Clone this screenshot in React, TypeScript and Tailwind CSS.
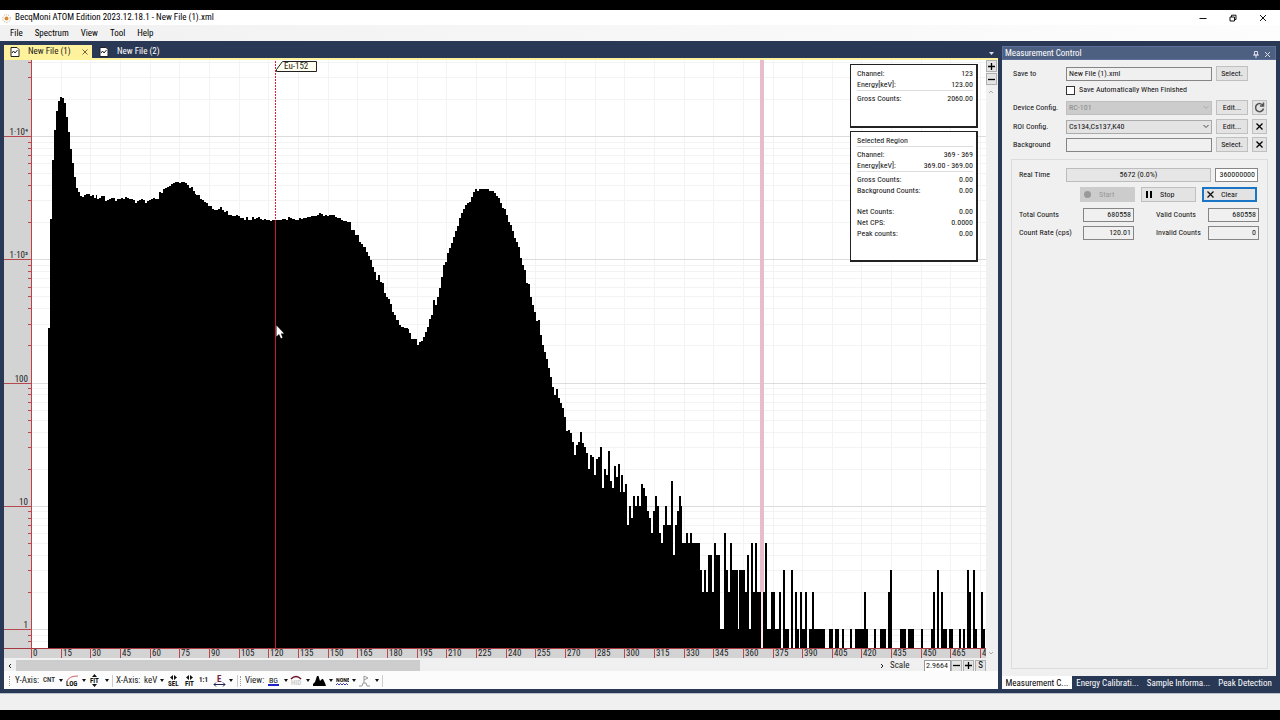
import type { ReactNode } from "react";

// Column tops of the smooth part of the spectrum: one value per channel, 2px wide
const COLUMN_WIDTH = 2;
const COLUMN_START = 48;
const columns: number[] = [
  328, 219, 160, 130, 111, 101, 97, 98, 103, 117, 132, 149, 163, 177, 188, 192, 196, 197, 195, 194, 194, 196, 195,
  198, 195, 199, 198, 196, 196, 201, 200, 199, 198, 198, 201, 199, 199, 198, 199, 197, 198, 199, 199, 200, 203, 201,
  200, 199, 200, 203, 201, 200, 199, 198, 199, 199, 192, 193, 189, 188, 187, 186, 184, 183, 182, 182, 183, 182, 182,
  183, 185, 188, 187, 191, 194, 195, 195, 199, 200, 202, 203, 206, 206, 209, 210, 210, 209, 207, 210, 212, 211, 215,
  215, 216, 216, 215, 216, 218, 218, 220, 217, 220, 220, 217, 219, 218, 217, 219, 220, 219, 220, 220, 221, 220, 220,
  220, 220, 220, 219, 219, 220, 217, 218, 219, 219, 220, 220, 218, 219, 218, 218, 217, 217, 216, 216, 216, 215, 213,
  214, 216, 215, 216, 215, 215, 215, 217, 218, 218, 220, 221, 221, 222, 222, 230, 230,
];

// Step outline past the plateau: [x, y]
const outline: [number, number][] = [
  [350, 230], [355, 235], [359, 242], [361, 244], [363, 247], [366, 252], [368, 256], [370, 260], [372, 267],
  [374, 272], [376, 280], [378, 275], [380, 282], [382, 283], [384, 293], [386, 297], [388, 299], [390, 304],
  [392, 312], [394, 315], [396, 320], [399, 325], [401, 327], [404, 328], [408, 329], [409, 333], [411, 339],
  [415, 339], [417, 345], [419, 342], [421, 341], [423, 337], [425, 332], [427, 327], [429, 319], [431, 315],
  [433, 300], [435, 305], [437, 297], [439, 288], [441, 277], [443, 265], [445, 262], [447, 253], [449, 248],
  [451, 243], [453, 237], [455, 231], [457, 226], [459, 218], [461, 213], [463, 209], [465, 205], [467, 203],
  [469, 202], [471, 197], [473, 192], [475, 189], [477, 191], [479, 189], [489, 191], [494, 193], [496, 196],
  [498, 198], [500, 203], [502, 208], [504, 209], [506, 215], [508, 222], [510, 225], [512, 231], [514, 238],
  [516, 242], [518, 247], [520, 258], [522, 265], [524, 270], [526, 283], [528, 284], [530, 297], [532, 305],
  [534, 312], [536, 321], [538, 320], [540, 335], [542, 345], [544, 352], [546, 359], [548, 368], [550, 377],
  [552, 387], [554, 395], [556, 389], [558, 398], [560, 403], [562, 408], [564, 417], [566, 431], [568, 430],
  [570, 433], [572, 442], [574, 455], [576, 445], [578, 442], [580, 432], [582, 443], [584, 447], [586, 453],
  [588, 469], [590, 455], [592, 457], [594, 475], [596, 459], [598, 457], [600, 447], [602, 488], [604, 469],
  [606, 475], [608, 451], [610, 481], [612, 488], [614, 466], [616, 477], [618, 464], [620, 492], [621, 475],
  [623, 492], [625, 484], [627, 525], [629, 506], [631, 518], [633, 496], [635, 506], [637, 496], [639, 506],
  [641, 484], [643, 488], [645, 496], [647, 511], [649, 518], [651, 533], [653, 511], [655, 496], [657, 506],
  [659, 533], [661, 543], [663, 525], [665, 506], [667, 525], [671, 481], [673, 555], [675, 525], [677, 511],
  [679, 496], [681, 506], [682, 543], [686, 533], [688, 543], [690, 533], [692, 543],
];

// Sparse tail: [x, counts]
const tail: [number, number][] = [
  [700, 3], [702, 2], [704, 3], [706, 2], [708, 4], [712, 2], [714, 5], [716, 4], [720, 1], [724, 6], [726, 3],
  [728, 2], [730, 5], [732, 3], [738, 1], [739, 3], [745, 2], [747, 4], [749, 1], [751, 5], [753, 2], [755, 5],
  [757, 2], [765, 5], [767, 1], [771, 2], [775, 1], [779, 2], [781, 0], [783, 3], [785, 1], [789, 0], [791, 3],
  [793, 0], [795, 2], [797, 1], [799, 0], [800, 2], [802, 1], [805, 2], [807, 0], [809, 1], [812, 2], [814, 1],
  [825, 0], [829, 1], [833, 0], [835, 1], [839, 0], [842, 1], [844, 0], [850, 1], [852, 0], [855, 1], [864, 2],
  [866, 1], [868, 0], [874, 1], [876, 0], [880, 1], [886, 0], [888, 2], [890, 3], [892, 0], [900, 1], [906, 0],
  [908, 1], [914, 0], [921, 1], [923, 0], [931, 1], [933, 2], [935, 0], [937, 3], [939, 0], [941, 2], [943, 1],
  [947, 0], [949, 1], [953, 0], [959, 1], [961, 0], [963, 1], [965, 0], [967, 3], [969, 2], [971, 0], [973, 3],
  [975, 1], [977, 0], [981, 2], [983, 1],
];

const LEFT = 32;
const RIGHT = 986;
const BASE = 648;
const DECADE = 123.25;

const countToY = (n: number) => (n === 0 ? BASE : Math.floor(629.5 - DECADE * Math.log10(n)));

const steps: [number, number][] = [
  ...columns.map((y, i): [number, number] => [COLUMN_START + i * COLUMN_WIDTH - Math.round(i / 50), y]),
  ...outline,
  ...tail.map(([x, n]): [number, number] => [x, countToY(n)]),
];

const spectrumPath = `M48 ${BASE}` + steps.map(([x, y]) => `H${x}V${y}`).join("") + `H985V${BASE}Z`;

// A label with no room left before the right edge keeps its first digit only
const xTicks = Array.from({ length: 33 }, (_, i) => {
  const x = Math.floor(31.5 + i * 29.66);
  const label = String(i * 15);
  return { x, label: x + 14 > RIGHT ? label[0] : label };
});

const yTicks = Array.from({ length: 5 }, (_, d) =>
  Array.from({ length: 9 }, (_, k) => ({ major: k === 0, y: countToY((k + 1) * 10 ** d) }))
)
  .flat()
  .concat([
    { major: false, y: 635 },
    { major: false, y: 641 },
  ])
  .filter((t) => t.y > 60);

const yLabels = [
  { text: "1·10⁴", y: 136 },
  { text: "1·10³", y: 259 },
  { text: "100", y: 383 },
  { text: "10", y: 506 },
  { text: "1", y: 629 },
];

const markerDashes = Array.from({ length: 53 }, (_, i) => 61 + i * 3);

const ui = "font-['Roboto_Condensed','Roboto',sans-serif]";

function SpectrumChart() {
  return (
    <svg
      className="absolute inset-0 size-full"
      viewBox="4 60 982 598"
      preserveAspectRatio="xMinYMin slice"
      role="img"
      aria-label="Spectrum"
    >
      <rect x="4" y="60" width="982" height="598" fill="#fff" />
      <g shapeRendering="crispEdges">
        {xTicks.map((t) => (
          <rect key={t.x} x={t.x} y="60" width="1" height="588" fill="#f3f3f3" />
        ))}
        {yTicks.map((t) => (
          <rect key={t.y} x={LEFT} y={t.y} width={RIGHT - LEFT} height="1" fill={t.major ? "#dcdcdc" : "#f3f3f3"} />
        ))}
        <path d={spectrumPath} fill="#000" />

        {/* Axes */}
        <rect x="4" y="60" width="27" height="598" fill="#d3d3d3" />
        <rect x="4" y="649" width="982" height="9" fill="#d3d3d3" />
        <rect x="31" y="60" width="1" height="589" fill="#c04048" />
        <rect x="4" y="648" width="982" height="1" fill="#a83840" />
        {yTicks.map((t) => (
          <rect key={t.y} x={t.major ? 4 : 28} y={t.y} width={t.major ? 28 : 4} height="1" fill="#b84850" />
        ))}
        {xTicks.map((t) => (
          <rect key={t.x} x={t.x} y="648" width="1" height="10" fill="#b84850" />
        ))}

        {/* Selected region and nuclide marker */}
        <rect x="760" y="60" width="4" height="532" fill="#e8bccb" />
        <rect x="761" y="592" width="2" height="56" fill="#ffe4ea" />
        {markerDashes.map((y) => (
          <rect key={y} x="275" y={y} width="1" height="2" fill="#e02030" />
        ))}
        <rect x="275" y="220" width="1" height="428" fill="#c81c2c" />
      </g>
      <path d="M276.500 69.500L282.500 61.500H316.500V71.500H276.500Z" fill="#fffff0" stroke="#222" />
      <g className={`${ui} text-[9px]`} fill="#222">
        <text x="284" y="69">Eu-152</text>
        {yLabels.map((l) => (
          <text key={l.text} x="28" y={l.y - 1} textAnchor="end">{l.text}</text>
        ))}
        {xTicks.map((t) => (
          <text key={t.x} x={t.x + 2} y="656">{t.label}</text>
        ))}
      </g>
      <path d="M276.500 325.500V336.500L279 334L281 338.500L282.500 337.500L280.800 333.500H284Z" fill="#fff" />
    </svg>
  );
}

function InfoRow({ label, value, className = "" }: { label: string; value?: string; className?: string }) {
  return (
    <div className={`flex items-center justify-between ${className}`}>
      <dt>{label}</dt>
      {value && <dd>{value}</dd>}
    </div>
  );
}

const infoBox = "border border-[#222] border-r-2 border-b-2 bg-white pt-[3px] pr-[3px] pl-[6px]";
const ruled = "border-t border-[#ddd] pt-[2px]";

function InfoBoxes() {
  return (
    <div className="absolute top-1 right-2 flex w-32 flex-col gap-[3px] text-[8px] leading-[11px] text-[#111]">
      <dl className={`${infoBox} h-16`}>
        <InfoRow label="Channel:" value="123" />
        <InfoRow label="Energy[keV]:" value="123.00" />
        <InfoRow label="Gross Counts:" value="2060.00" className={ruled} />
      </dl>
      <dl className={`${infoBox} h-[131px]`}>
        <InfoRow label="Selected Region" />
        <InfoRow label="Channel:" value="369 - 369" className={ruled} />
        <InfoRow label="Energy[keV]:" value="369.00 - 369.00" />
        <InfoRow label="Gross Counts:" value="0.00" className={ruled} />
        <InfoRow label="Background Counts:" value="0.00" />
        <InfoRow label="Net Counts:" value="0.00" className="mt-[10px]" />
        <InfoRow label="Net CPS:" value="0.0000" />
        <InfoRow label="Peak counts:" value="0.00" />
      </dl>
    </div>
  );
}

function TitleBar() {
  return (
    <header className="flex h-[15px] shrink-0 items-center bg-white pt-px pr-[13px] pl-[2px] text-[9px] text-black">
      <svg className="mr-1 size-[9px]" viewBox="0 0 9 9" aria-hidden="true">
        <circle cx="4.500" cy="4.500" r="2" fill="#d98a3a" />
        <circle cx="4.500" cy="4.500" r="3.800" fill="none" stroke="#b99a74" strokeDasharray="1 1.400" />
      </svg>
      <h1 className="flex-1">BecqMoni ATOM Edition 2023.12.18.1 - New File (1).xml</h1>
      <div className="flex gap-[22px]">
        <button aria-label="Minimize">
          <svg className="size-2" viewBox="0 0 8 8" stroke="#111"><path d="M.5 4.500H7.500" /></svg>
        </button>
        <button aria-label="Restore">
          <svg className="size-2" viewBox="0 0 8 8" fill="none" stroke="#111">
            <path d="M1 3H5.500V7H1ZM2.500 3V1.200H7V5.500H5.500" />
          </svg>
        </button>
        <button aria-label="Close">
          <svg className="size-2" viewBox="0 0 8 8" stroke="#111"><path d="M1 1L7 7M7 1L1 7" /></svg>
        </button>
      </div>
    </header>
  );
}

function MenuBar() {
  return (
    <nav className="flex h-4 shrink-0 items-center gap-3 bg-linear-to-r from-[#f1f1f1] to-[#fdfdfd] pt-[2px] pl-[10px] text-[9px] text-black">
      {["File", "Spectrum", "View", "Tool", "Help"].map((item) => (
        <button key={item}>{item}</button>
      ))}
    </nav>
  );
}

function FileIcon({ className }: { className: string }) {
  return (
    <svg className={`size-[10px] ${className}`} viewBox="0 0 10 10" aria-hidden="true">
      <path d="M1 .5H7L9 2.500V9.500H1Z" fill="#fff" stroke="#222" />
      <path d="M2 6L3.500 4L5 6L7.500 3" fill="none" stroke="#222" />
    </svg>
  );
}

function DocumentTabs() {
  return (
    <div className="flex h-[19px] shrink-0 items-end border-b-2 border-[#fff29d] text-[9px]">
      <div className="flex h-[13px] w-[88px] items-center bg-[#fff29d] pt-px pr-1 pl-[6px] text-[#222]">
        <FileIcon className="mr-2" />
        <button className="flex-1 text-left">New File (1)</button>
        <button aria-label="Close tab">
          <svg className="size-[6px]" viewBox="0 0 6 6" stroke="#75633d"><path d="M.5 .5L5.500 5.500M5.500 .5L.5 5.500" /></svg>
        </button>
      </div>
      <button className="flex h-[13px] items-center pt-px pl-[7px] text-white">
        <FileIcon className="mr-2" />
        New File (2)
      </button>
      <button aria-label="Open files" className="mr-1 mb-[3px] ml-auto">
        <svg className="h-[3px] w-[5px]" viewBox="0 0 5 3" fill="#dde"><path d="M0 0H5L2.500 3Z" /></svg>
      </button>
    </div>
  );
}

function Glyph({ d }: { d: string }) {
  return (
    <svg className="size-[9px]" viewBox="0 0 9 9" fill="none" stroke="currentColor" strokeWidth="1.300">
      <path d={d} />
    </svg>
  );
}

const MINUS = "M1 4.500H8";
const PLUS = "M1 4.500H8M4.500 1V8";
const CROSS = "M1.500 1.500L7.500 7.500M7.500 1.500L1.500 7.500";

const smallButton = "flex h-3 w-[11px] items-center justify-center border border-[#b0b0b0] bg-[#e4e4e4] text-black";

function VerticalBar() {
  return (
    <div className="flex w-3 shrink-0 flex-col items-start bg-[#f0f0f0]">
      <button aria-label="Zoom in" className={smallButton}><Glyph d={PLUS} /></button>
      <button aria-label="Zoom out" className={`${smallButton} mt-px`}><Glyph d={MINUS} /></button>
      <button aria-label="Scroll up" className="mt-[5px] ml-[2px]">
        <svg className="h-1 w-[6px]" viewBox="0 0 6 4" fill="none" stroke="#aaa"><path d="M1 3L3 1L5 3" /></svg>
      </button>
      <button aria-label="Scroll down" className="mt-auto mb-[3px] ml-[2px]">
        <svg className="h-1 w-[6px]" viewBox="0 0 6 4" fill="none" stroke="#aaa"><path d="M1 1L3 3L5 1" /></svg>
      </button>
    </div>
  );
}

function ScaleRow() {
  return (
    <div className="flex h-[13px] shrink-0 items-center bg-[#f0f0f0] pt-[2px] pr-3 text-[9px] text-[#222]">
      <button aria-label="Scroll left" className="flex w-3 justify-center">
        <svg className="h-[6px] w-1" viewBox="0 0 4 6" fill="none" stroke="#222"><path d="M3 1L1 3L3 5" /></svg>
      </button>
      <div className="h-[11px] flex-1">
        <div className="h-full w-[47%] bg-[#cdcdcd]" />
      </div>
      <button aria-label="Scroll right" className="flex w-3 justify-center">
        <svg className="h-[6px] w-1" viewBox="0 0 4 6" fill="none" stroke="#222"><path d="M1 1L3 3L1 5" /></svg>
      </button>
      <label htmlFor="scale" className="ml-[2px] w-[34px]">Scale</label>
      <input id="scale" defaultValue="2.9664" className="h-3 w-[27px] border border-[#999] bg-white pl-px text-[8px]" />
      <button aria-label="Decrease scale" className={smallButton}><Glyph d={MINUS} /></button>
      <button aria-label="Increase scale" className={`${smallButton} ml-px`}><Glyph d={PLUS} /></button>
      <button className={`${smallButton} ml-px`}>S</button>
    </div>
  );
}

function ToolButton({ label, width, caret = true, children }: { label: string; width: string; caret?: boolean; children: ReactNode }) {
  return (
    <button aria-label={label} className={`flex h-full shrink-0 items-center justify-between ${width}`}>
      {children}
      {caret && <svg className="h-[3px] w-1" viewBox="0 0 4 3" fill="#111"><path d="M0 0H4L2 3Z" /></svg>}
    </button>
  );
}

const Grip = () => <span className="h-[10px] border-l border-dotted border-[#999]" />;
const Divider = () => <span className="h-3 border-l border-[#ccc]" />;

const iconText = "text-[7px] font-bold";

function Toolbar() {
  return (
    <div className="flex h-[18px] shrink-0 items-center bg-[#fcfcfc] pt-px pl-[5px] text-[9px] text-[#222]">
      <Grip />
      <span className="ml-[5px] w-7">Y-Axis:</span>
      <ToolButton label="Count unit" width="w-5"><span className="text-[7px] font-medium">CNT</span></ToolButton>
      <span className="w-[3px]" />
      <ToolButton label="Logarithmic scale" width="w-5">
        <svg className="h-3 w-[13px]" viewBox="0 0 13 12" fill="#111">
          <path d="M1 6Q3 1 12 1" fill="none" stroke="#c66" />
          <text x="0" y="11" className={iconText}>LOG</text>
        </svg>
      </ToolButton>
      <span className="w-[3px]" />
      <ToolButton label="Fit vertically" width="w-5">
        <svg className="h-[13px] w-[11px]" viewBox="0 0 11 13" fill="#111">
          <path d="M3 3L5.500 0L8 3ZM3 10L5.500 13L8 10Z" />
          <text x="1" y="9" className={iconText}>FIT</text>
        </svg>
      </ToolButton>
      <span className="w-[3px]" />
      <Divider />
      <span className="w-[31px] pl-[3px]">X-Axis:</span>
      <ToolButton label="X unit" width="w-5"><span>keV</span></ToolButton>
      <span className="w-[3px]" />
      <ToolButton label="Fit selection" width="w-[17px]" caret={false}>
        <svg className="h-3 w-[13px]" viewBox="0 0 13 12" fill="#111">
          <path d="M6 0V5L3 2.500ZM7 0V5L10 2.500Z" />
          <text x="1" y="11" className={iconText}>SEL</text>
        </svg>
      </ToolButton>
      <ToolButton label="Fit horizontally" width="w-[15px]" caret={false}>
        <svg className="h-3 w-[11px]" viewBox="0 0 11 12" fill="#111">
          <path d="M5 0V5L2 2.500ZM6 0V5L9 2.500Z" />
          <text x="1" y="11" className={iconText}>FIT</text>
        </svg>
      </ToolButton>
      <ToolButton label="Actual size" width="w-[14px]" caret={false}><span className={iconText}>1:1</span></ToolButton>
      <ToolButton label="Energy axis" width="w-5">
        <svg className="h-3 w-[13px]" viewBox="0 0 13 12" fill="#7a1f3d">
          <text x="4" y="7" className="text-[9px] font-bold">E</text>
          <path d="M1 9.500H12M3 7.500L1 9.500L3 11.500M10 7.500L12 9.500L10 11.500" fill="none" stroke="#225" />
        </svg>
      </ToolButton>
      <span className="w-1" />
      <Divider />
      <span className="w-[2px]" />
      <Grip />
      <span className="ml-1 w-[23px]">View:</span>
      <ToolButton label="Background" width="w-5">
        <svg className="h-3 w-[11px]" viewBox="0 0 11 12" fill="#111">
          <text x="1" y="8" className="text-[8px]">BG</text>
          <rect x="0" y="9" width="11" height="2" fill="#22c" />
        </svg>
      </ToolButton>
      <span className="w-[2px]" />
      <ToolButton label="Hide peaks" width="w-5">
        <svg className="h-3 w-3" viewBox="0 0 12 12" fill="#ccc">
          <text x="1" y="10" className={iconText}>HID</text>
          <path d="M1 4Q6 -1 11 4" fill="none" stroke="#612" strokeWidth="1.500" />
        </svg>
      </ToolButton>
      <span className="w-[3px]" />
      <ToolButton label="Fill style" width="w-5">
        <svg className="h-3 w-[13px]" viewBox="0 0 13 12" fill="#000">
          <path d="M0 11V9L2 7L4 1L5.500 1L7 6L9 4L10 4L12 8L13 11Z" />
        </svg>
      </ToolButton>
      <span className="w-[3px]" />
      <ToolButton label="Smoothing" width="w-5">
        <svg className="h-3 w-[13px]" viewBox="0 0 13 12" fill="#111">
          <text x="0" y="7" className="text-[6px] font-bold">NONE</text>
          <path d="M0 10L1.500 8.500L3 10L4.500 8.500L6 10L7.500 8.500L9 10L10.500 8.500L12 10" fill="none" stroke="#33a" />
        </svg>
      </ToolButton>
      <span className="w-[3px]" />
      <ToolButton label="Peak flags" width="w-5">
        <svg className="h-3 w-[11px]" viewBox="0 0 11 12" fill="none" stroke="#999">
          <path d="M0 11H3L4 8H7L8 11H11M5 8V1L9 3L5 5" />
        </svg>
      </ToolButton>
      <span className="w-[3px]" />
      <Divider />
    </div>
  );
}

const fieldButton = "flex h-[15px] items-center justify-center border border-[#c0c0c0] bg-[#e3e3e3]";
const textField = "h-[14px] w-full min-w-0 border border-[#858585] px-[2px] pb-px";
const formRow = "grid h-[14px] grid-cols-[49px_1fr_32px_15px] items-center gap-1";

function Chevron({ color }: { color: string }) {
  return (
    <svg className="pointer-events-none absolute top-1 right-[3px] h-[5px] w-[6px]" viewBox="0 0 6 5" fill="none" stroke={color}>
      <path d="M.5 1L3 3.500L5.500 1" />
    </svg>
  );
}

function Reading({ id, label, value, labelWidth }: { id: string; label: string; value: string; labelWidth: string }) {
  return (
    <div className="flex items-center">
      <label htmlFor={id} className={`shrink-0 ${labelWidth}`}>{label}</label>
      <input id={id} readOnly value={value} className="h-[14px] w-[51px] border border-[#858585] bg-[#f0f0f0] px-[2px] pb-px text-right" />
    </div>
  );
}

function MeasurementPanel() {
  return (
    <aside className="flex w-[274px] shrink-0 flex-col pt-[5px]">
      <div className="flex h-[14px] shrink-0 items-center border border-[#5b7199] bg-[#4d6082] pt-[2px] pr-1 pl-[2px] text-[9px] text-white">
        <h2 className="flex-1">Measurement Control</h2>
        <button aria-label="Pin" className="mr-[5px]">
          <svg className="h-[7px] w-[6px]" viewBox="0 0 6 7" fill="none" stroke="#dde"><path d="M1.500 .5H4.500V4H1.500ZM0 4H6M3 4V7" /></svg>
        </button>
        <button aria-label="Close panel">
          <svg className="size-[7px]" viewBox="0 0 7 7" stroke="#dde"><path d="M1 1L6 6M6 1L1 6" /></svg>
        </button>
      </div>

      <div className="flex flex-1 flex-col bg-[#f0f0f0] pt-[6px] pr-2 pb-[7px] pl-[9px] text-[8px] text-[#111]">
        <div className="flex flex-col pr-px pl-[2px]">
          <div className={formRow}>
            <label htmlFor="save-to">Save to</label>
            <input id="save-to" defaultValue="New File (1).xml" className={textField} />
            <button className={fieldButton}>Select.</button>
          </div>
          <label className="mt-[3px] ml-[53px] flex h-[14px] items-center gap-1">
            <input type="checkbox" className="size-[9px] appearance-none border border-[#333] bg-white" />
            Save Automatically When Finished
          </label>
          <div className={`${formRow} mt-[3px]`}>
            <label htmlFor="device">Device Config.</label>
            <div className="relative">
              <select id="device" disabled className="block h-[14px] w-full appearance-none border border-[#bfbfbf] bg-[#ccc] px-[2px] text-[#888]">
                <option>RC-101</option>
              </select>
              <Chevron color="#aaa" />
            </div>
            <button className={fieldButton}>Edit...</button>
            <button aria-label="Reload device" className={fieldButton}>
              <svg className="size-[11px]" viewBox="0 0 11 11" fill="none" stroke="#555" strokeWidth="1.500">
                <path d="M9 3.500A4 4 0 1 0 9.500 6.500M9.500 .5V4H6" />
              </svg>
            </button>
          </div>
          <div className={`${formRow} mt-[5px]`}>
            <label htmlFor="roi">ROI Config.</label>
            <div className="relative">
              <select id="roi" className="block h-[14px] w-full appearance-none border border-[#aaa] bg-[#e3e3e3] px-[2px]">
                <option>Cs134,Cs137,K40</option>
              </select>
              <Chevron color="#444" />
            </div>
            <button className={fieldButton}>Edit...</button>
            <button aria-label="Clear ROI" className={`${fieldButton} text-black`}><Glyph d={CROSS} /></button>
          </div>
          <div className={`${formRow} mt-1`}>
            <label htmlFor="background">Background</label>
            <input id="background" className={textField} />
            <button className={fieldButton}>Select.</button>
            <button aria-label="Clear background" className={`${fieldButton} text-black`}><Glyph d={CROSS} /></button>
          </div>
        </div>

        <section className="mt-2 flex-1 border border-[#dcdcdc] pt-2 pr-2 pl-[7px]">
          <div className="flex h-[14px] items-center pr-px">
            <span className="w-[47px] shrink-0">Real Time</span>
            <div role="progressbar" aria-label="Real Time" className="flex h-[14px] flex-1 items-center justify-center border border-[#bcbcbc] bg-[#e6e6e6]">
              5672 (0.0%)
            </div>
            <input aria-label="Preset time" defaultValue="360000000" className="ml-1 h-[14px] w-[43px] border border-[#858585] bg-white px-[2px] pb-px text-right" />
          </div>
          <div className="mt-[5px] flex justify-end gap-[6px] pr-[2px]">
            <button disabled className="flex h-[15px] w-[55px] items-center gap-2 bg-[#ccc] pl-1 text-[#999]">
              <span className="size-[7px] rounded-full bg-[#999]" />
              Start
            </button>
            <button className="flex h-[15px] w-[55px] items-center gap-2 border border-[#c0c0c0] bg-[#e3e3e3] pl-1">
              <svg className="h-[7px] w-[6px]" viewBox="0 0 6 7"><path d="M0 0H2V7H0ZM4 0H6V7H4Z" /></svg>
              Stop
            </button>
            <button className="flex h-[15px] w-[55px] items-center gap-[6px] border-2 border-[#1a75c4] bg-[#e3e3e3] pl-[2px]">
              <Glyph d={CROSS} />
              Clear
            </button>
          </div>
          <div className="mt-[6px] grid grid-cols-2 gap-y-1">
            <Reading id="total" label="Total Counts" value="680558" labelWidth="w-16" />
            <div className="flex justify-end"><Reading id="valid" label="Valid Counts" value="680558" labelWidth="w-[52px]" /></div>
            <Reading id="rate" label="Count Rate (cps)" value="120.01" labelWidth="w-16" />
            <div className="flex justify-end"><Reading id="invalid" label="Invalid Counts" value="0" labelWidth="w-[52px]" /></div>
          </div>
        </section>
      </div>

      <div className="flex h-[13px] shrink-0 items-center text-[9px] text-white">
        <button className="h-full w-[70px] bg-white pt-px text-black">Measurement C...</button>
        <button className="h-full w-[71px] pt-px">Energy Calibrati...</button>
        <button className="h-full w-[71px] pt-px">Sample Informa...</button>
        <button className="h-full flex-1 pt-px">Peak Detection</button>
      </div>
    </aside>
  );
}

export default function App() {
  return (
    <div className={`flex h-screen flex-col bg-black py-[10px] ${ui}`}>
      <TitleBar />
      <MenuBar />
      <div className="flex min-h-0 flex-1 gap-1 bg-[#293955] pr-1 pb-1 pl-1">
        <main className="flex min-w-0 flex-1 flex-col">
          <DocumentTabs />
          <div className="flex min-h-0 flex-1">
            <div className="relative min-w-0 flex-1 overflow-hidden">
              <SpectrumChart />
              <InfoBoxes />
            </div>
            <VerticalBar />
          </div>
          <ScaleRow />
          <Toolbar />
        </main>
        <MeasurementPanel />
      </div>
      <footer className="h-[17px] shrink-0 border-t border-[#b8c0cc] bg-[#f0f0f0]" />
    </div>
  );
}
